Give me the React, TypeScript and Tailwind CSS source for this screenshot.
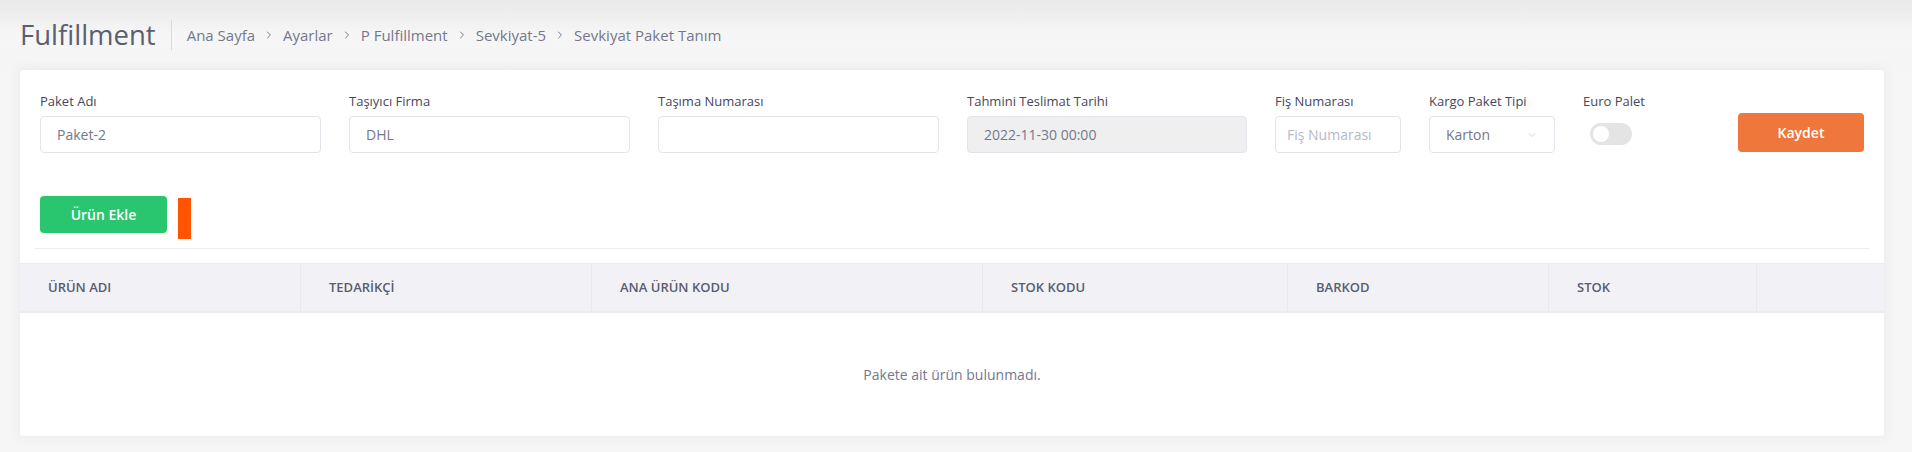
import { ChevronRight, ChevronDown } from "lucide-react";

const crumbs = ["Ana Sayfa", "Ayarlar", "P Fulfillment", "Sevkiyat-5", "Sevkiyat Paket Tanım"];

const columns = [
    { title: "ÜRÜN ADI", w: "w-[280px]" },
    { title: "TEDARİKÇİ", w: "w-[291px]" },
    { title: "ANA ÜRÜN KODU", w: "w-[391px]" },
    { title: "STOK KODU", w: "w-[305px]" },
    { title: "BARKOD", w: "w-[261px]" },
    { title: "STOK", w: "w-[208px]" },
    { title: "", w: "flex-1" },
];

const Field = ({ label, width, children }: { label: string; width: string; children: React.ReactNode }) => (
    <div className={`flex flex-col ${width}`}>
        <label className="h-[18px] text-[13px] leading-[18px] font-medium text-[#48465b]">{label}</label>
        <div className="mt-[6px]">{children}</div>
    </div>
);

const inputClass =
    "h-[37px] w-full rounded-[4px] border border-[#e2e5ec] px-4 text-[14px] text-[#74788d] outline-none placeholder:text-[#b5b8c8]";

const App = () => {
    return (
        <div
            className="min-h-[452px] bg-[#f6f6f6] pl-5 pr-7 text-[#595d6e]"
            style={{ fontFamily: '"Open Sans", "Noto Sans", sans-serif' }}
        >
            <div className="-ml-5 -mr-7 flex h-[70px] items-center bg-gradient-to-b from-[#e9e9e9] via-[#f6f6f6] to-[#f5f5f5] pl-[20px]">
                <h1 className="text-[27.5px] leading-none font-normal text-[#5a5e70]">Fulfillment</h1>
                <div className="mx-[15px] h-[30px] w-px bg-[#d9d9de]" />
                <nav className="flex items-center text-[15px] text-[#74788d]">
                    {crumbs.map((c, i) => (
                        <div key={c} className="flex items-center">
                            {i > 0 && <ChevronRight className="mx-[8px] h-3 w-3 text-[#74788d]" strokeWidth={2} />}
                            <span>{c}</span>
                        </div>
                    ))}
                </nav>
            </div>

            <div className="rounded-[4px] bg-white shadow-[0_0_13px_0_rgba(82,63,105,0.08)]">
                <div className="px-5 pt-[22px]">
                    <div className="flex items-start">
                        <div className="flex gap-[28px]">
                            <Field label="Paket Adı" width="w-[281px]">
                                <input className={inputClass} defaultValue="Paket-2" />
                            </Field>
                            <Field label="Taşıyıcı Firma" width="w-[281px]">
                                <input className={inputClass} defaultValue="DHL" />
                            </Field>
                            <Field label="Taşıma Numarası" width="w-[281px]">
                                <input className={inputClass} defaultValue="" />
                            </Field>
                            <Field label="Tahmini Teslimat Tarihi" width="w-[280px]">
                                <input
                                    className={`${inputClass} bg-[#efefef]`}
                                    defaultValue="2022-11-30 00:00"
                                    disabled
                                />
                            </Field>
                            <Field label="Fiş Numarası" width="w-[126px]">
                                <input className={`${inputClass} px-[11px]`} placeholder="Fiş Numarası" />
                            </Field>
                            <Field label="Kargo Paket Tipi" width="w-[126px]">
                                <div className={`${inputClass} flex items-center justify-between pl-4 pr-[16px]`}>
                                    <span>Karton</span>
                                    <ChevronDown className="h-3 w-3 text-[#c4c6d0]" strokeWidth={1.5} />
                                </div>
                            </Field>
                            <Field label="Euro Palet" width="w-[80px]">
                                <div className="ml-[7px] mt-[7px] flex h-[22px] w-[42px] items-center rounded-full bg-[#e4e4e4] pl-[3px]">
                                    <div className="h-[16px] w-[16px] rounded-full bg-white" />
                                </div>
                            </Field>
                        </div>
                        <button className="ml-auto mt-[21px] h-[39px] w-[126px] rounded-[4px] bg-[#ef773b] text-[14px] font-semibold text-white">
                            Kaydet
                        </button>
                    </div>

                    <div className="mt-[43px] flex items-start gap-[11px]">
                        <button className="h-[37px] w-[127px] rounded-[4px] bg-[#2ac56f] text-[14px] font-semibold text-white">
                            Ürün Ekle
                        </button>
                        <div className="mt-[2px] h-[41px] w-[13px] bg-[#ff5500]" />
                    </div>

                    <div className="-mx-[6px] mt-[9px] h-px bg-[#ebedf2]" />
                </div>

                <div className="mt-[14px]">
                    <div className="flex h-[50px] border-t border-b-2 border-[#ebebf0] bg-[#f2f1f6]">
                        {columns.map((c, i) => (
                            <div
                                key={i}
                                className={`${c.w} flex items-center border-[#e8e8ee] px-[28px] text-[13px] font-semibold text-[#595d6e] ${
                                    i > 0 ? "border-l" : ""
                                }`}
                            >
                                {c.title}
                            </div>
                        ))}
                    </div>
                    <div className="flex h-[123px] items-center justify-center text-[14px] text-[#74788d]">
                        Pakete ait ürün bulunmadı.
                    </div>
                </div>
            </div>
        </div>
    );
};

export default App;
